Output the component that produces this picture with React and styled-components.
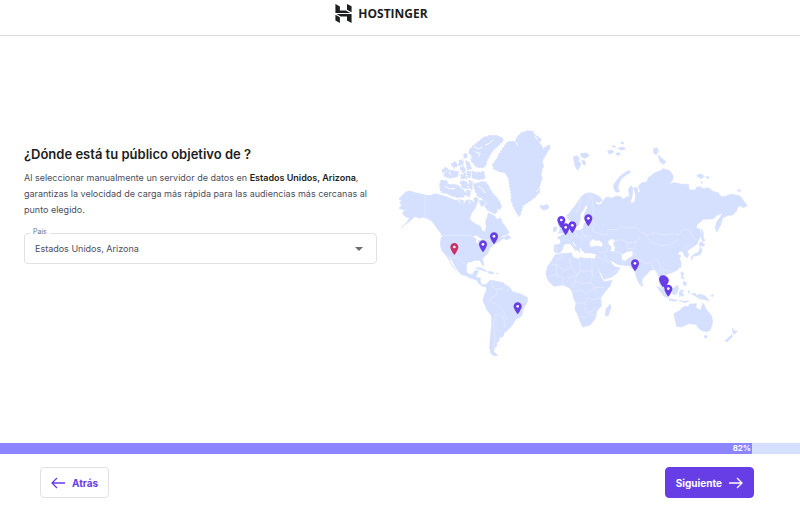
import React, { useState } from "react";
import styled, { createGlobalStyle } from "styled-components";
import { SiHostinger } from "react-icons/si";

const GlobalStyle = createGlobalStyle`
  * {
    box-sizing: border-box;
  }

  body {
    margin: 0;
    background: #fff;
    color: #1d1e20;
    font-family: Inter, "Open Sans", sans-serif;
  }
`;

const Page = styled.div`
  display: flex;
  flex-direction: column;
  min-height: 100vh;
`;

const Header = styled.header`
  display: flex;
  align-items: center;
  justify-content: center;
  height: 36px;
  padding: 0 38px 8px 0;
  border-bottom: 1px solid #dadce0;
`;

const Logo = styled.div`
  display: flex;
  align-items: center;
  gap: 5px;
  font-family: "Open Sans", sans-serif;
  font-size: 12px;
  font-weight: 700;
`;

const Main = styled.main`
  display: grid;
  grid-template-columns: 1fr 1fr;
  align-items: start;
  column-gap: 20px;
  flex: 1;
  padding: 93px 50px 48px 24px;
`;

const Target = styled.section`
  padding-top: 15px;
`;

const Title = styled.h1`
  margin: 0 0 6px;
  font-size: 13px;
  line-height: 20px;
  font-weight: 600;
`;

const Description = styled.p`
  margin: 0 0 15px;
  color: #4d4e5c;
  font-size: 9px;
  line-height: 16px;

  strong {
    color: #1d1e20;
    font-weight: 600;
  }
`;

const Field = styled.div`
  position: relative;

  label {
    position: absolute;
    top: -6px;
    left: 6px;
    padding: 0 3px;
    background: #fff;
    color: #727586;
    font-size: 7px;
    line-height: 10px;
  }

  svg {
    position: absolute;
    top: 14px;
    right: 14px;
    pointer-events: none;
  }
`;

const Select = styled.select`
  display: block;
  width: 100%;
  height: 31px;
  padding: 0 30px 0 10px;
  appearance: none;
  background: #fff;
  border: 1px solid #e1e2e8;
  border-radius: 4px;
  color: #4d4e5c;
  font-family: inherit;
  font-size: 9px;
`;

const Map = styled.svg`
  display: block;
  width: 100%;
  height: auto;
`;

const Progress = styled.div`
  height: 11px;
  background: #d5dfff;
`;

const ProgressFill = styled.div`
  height: 100%;
  padding-right: 1px;
  background: #8c85ff;
  color: #fff;
  font-size: 8px;
  font-weight: 700;
  line-height: 11px;
  text-align: right;
`;

const Footer = styled.footer`
  display: flex;
  justify-content: space-between;
  padding: 13px 46px 23px 40px;
`;

const Button = styled.button`
  display: flex;
  align-items: center;
  justify-content: center;
  gap: 7px;
  height: 31px;
  padding: 0 10px;
  background: ${({ $primary }) => ($primary ? "#673de6" : "#fff")};
  border: 1px solid ${({ $primary }) => ($primary ? "#673de6" : "#e1e2e8")};
  border-radius: 4px;
  color: ${({ $primary }) => ($primary ? "#fff" : "#673de6")};
  font-family: inherit;
  font-size: 10px;
  font-weight: 700;
  cursor: pointer;
`;

const LAND = [
  // north america
  "M12 262 20 252 14 244 22 238 12 235 22 222 35 212 45 210 60 215 75 218 90 222 105 224 120 218 135 222 150 226 165 232 180 238 195 236 210 240 222 236 232 240 240 246 236 232 246 228 250 238 245 250 240 262 230 275 224 290 228 300 240 308 256 316 262 330 270 332 274 318 272 300 278 285 280 276 290 280 300 286 306 296 316 290 322 305 332 318 338 328 342 335 332 342 318 346 326 350 340 342 348 350 335 356 325 352 312 362 300 368 292 374 284 382 280 395 270 405 262 412 265 425 266 435 260 428 254 418 240 418 228 422 218 424 214 436 214 452 222 460 234 460 238 450 250 448 246 460 242 468 256 472 256 484 262 492 272 490 280 492 274 497 262 496 252 488 244 476 228 472 212 464 198 460 190 450 182 438 174 424 166 412 161 409 166 425 176 440 184 448 178 442 168 428 160 414 156 406 148 398 140 388 136 370 138 352 142 345 136 334 126 322 118 310 108 298 96 292 84 288 72 292 60 286 54 292 42 302 28 312 18 320 36 304 44 292 30 286 22 276 30 268 18 264Z",
  // south america
  "M285 478 300 480 325 485 332 492 345 500 352 512 375 518 398 530 396 545 385 562 380 585 362 595 352 612 340 625 328 635 324 646 312 652 312 660 304 666 306 674 299 680 296 692 308 703 298 705 288 698 284 680 286 650 290 610 290 585 275 565 264 540 268 522 275 508 272 492Z",
  // africa
  "M480 402 500 398 530 396 533 408 550 415 556 409 565 412 580 412 597 414 605 435 613 455 620 472 627 482 651 478 645 495 630 512 617 530 619 555 605 570 601 592 585 612 563 618 555 600 547 578 540 565 543 545 535 530 533 515 525 502 505 492 477 496 460 480 453 460 457 438 470 420Z",
  "M645 550 648 560 639 585 631 584 633 565Z",
  // europe and asia
  "M518 292 516 282 524 276 530 266 540 255 550 240 558 228 570 218 585 215 600 220 615 228 622 238 612 245 600 240 604 250 615 252 625 240 632 230 640 228 650 232 662 226 675 226 685 235 698 226 705 230 700 205 708 194 714 202 712 222 706 245 713 247 720 240 722 225 717 200 726 200 730 216 736 212 730 196 740 185 755 183 760 170 780 155 795 150 805 143 825 150 835 165 832 178 822 188 840 185 860 190 880 190 883 207 900 207 906 198 915 197 924 203 940 200 955 212 970 215 975 225 990 227 1005 220 1022 222 1035 225 1050 245 1057 253 1045 260 1034 254 1027 260 1025 270 1012 282 1000 283 988 288 983 290 978 310 965 333 961 320 965 303 975 290 983 277 965 283 955 293 925 295 907 310 903 320 915 325 917 345 905 370 890 380 876 390 881 402 877 410 868 404 864 392 855 390 847 398 858 405 853 412 858 425 857 435 845 448 830 455 816 458 812 464 822 476 820 486 810 490 804 480 798 484 805 502 813 516 803 508 795 490 790 462 780 445 765 448 755 460 743 472 740 484 735 490 730 483 724 468 719 447 710 442 703 434 685 433 667 430 655 422 645 418 650 428 660 438 675 440 667 455 650 468 627 475 620 460 610 442 601 425 599 415 605 400 585 395 570 396 560 387 558 378 552 386 556 394 549 390 544 375 536 364 530 362 536 372 548 382 543 390 534 378 525 368 514 368 505 373 503 385 495 395 483 396 477 390 479 372 495 370 497 356 486 350 500 343 510 335 525 330 529 317 535 316 534 324 542 328 555 328 565 322 567 308 577 304 576 297 590 289 575 292 566 290 567 280 574 268 579 256 572 252 564 268 555 282 556 296 550 314 543 316 538 300 526 300Z",
  // british isles, iceland
  "M490 300 500 298 502 312 510 325 505 335 490 337 496 325 490 312Z",
  "M477 318 485 318 484 330 475 332Z",
  "M436 252 445 255 455 250 462 256 458 264 446 267 438 262Z",
  // svalbard, franz josef, novaya zemlya
  "M535 108 545 104 554 112 550 118 558 130 548 148 540 135Z",
  "M556 98 575 96 583 104 570 112 560 108Z",
  "M560 118 570 120 572 132 564 130Z",
  "M638 90 652 87 656 94 642 99ZM662 98 672 94 676 101 666 103ZM668 82 682 78 692 83 680 88ZM650 76 660 74 662 79ZM676 66 684 62 686 69Z",
  "M657 205 656 192 665 178 676 165 690 155 704 148 706 154 690 164 678 174 672 188 668 200 674 212 664 214Z",
  "M775 83 786 80 790 92 783 101 776 96ZM788 102 800 112 812 122 806 130 796 124Z",
  "M905 164 916 158 928 166 918 173ZM932 165 944 169 938 173ZM918 182 924 184 920 188ZM1027 208 1037 206 1035 212Z",
  // japan, sakhalin
  "M920 325 924 332 925 352 930 358 923 362 919 350Z",
  "M915 362 930 370 924 376 914 374ZM916 378 921 386 917 400 904 404 893 406 896 400 908 396 913 388ZM889 406 894 410 890 416Z",
  // south east asia
  "M858 452 866 456 862 466 868 474 860 472ZM866 482 874 484 873 494 864 490ZM853 436 858 432 857 440Z",
  "M785 495 794 500 806 511 818 524 817 531 806 524 795 510Z",
  "M820 533 834 535 846 538 843 541 824 538ZM852 538 868 541 882 539 870 545Z",
  "M829 503 838 500 847 492 851 503 844 519 834 521Z",
  "M855 509 867 507 860 513 867 524 862 526 858 520 855 527 852 518ZM880 508 884 511 882 518Z",
  "M890 518 900 517 906 524 916 519 930 525 943 539 927 535 915 534 906 528Z",
  "M948 524 956 520 952 528ZM739 485 744 490 741 496 737 491Z",
  // oceania
  "M837 578 855 568 862 560 870 556 878 557 885 549 893 549 905 548 902 560 917 568 923 546 928 553 933 565 950 585 953 605 945 628 935 632 925 630 916 626 910 620 903 610 880 608 860 618 845 616 840 595Z",
  "M928 644 937 644 934 652 929 650Z",
  "M1012 622 1018 630 1027 630 1018 640 1014 637ZM1010 641 1013 646 996 662 990 660Z",
  // caribbean
  "M242 441 256 440 270 447 275 452 262 448ZM278 452 290 452 298 457 284 458ZM304 456 310 457 306 459Z",
];

const ARCTIC = [
  // greenland
  "M290 130 295 145 310 153 330 157 340 175 343 200 347 220 347 240 357 265 370 287 377 285 381 270 385 255 400 245 420 230 435 215 435 195 443 175 440 155 447 135 443 120 455 100 467 80 463 70 445 80 435 65 440 53 420 40 415 30 400 28 380 33 367 45 360 60 340 60 330 70 320 85 310 100 303 115Z",
  // ellesmere
  "M222 85 235 72 250 60 265 48 285 42 305 42 324 50 326 60 312 74 300 84 292 94 284 107 277 120 272 137 262 142 245 140 235 130 225 117 230 105 220 98Z",
  "M228 148 245 153 268 150 272 174 250 178 230 172Z",
  // baffin
  "M233 185 245 186 258 180 274 182 284 198 294 216 306 228 314 240 322 256 316 268 306 264 310 272 300 280 286 274 274 266 266 252 270 242 258 232 248 228 240 212 236 200Z",
  // victoria and the smaller islands
  "M136 176 156 178 162 190 175 188 192 193 204 203 216 217 208 229 190 232 170 226 155 219 138 216 132 196Z",
  "M143 155 160 143 172 148 192 150 190 167 165 173 148 168Z",
  "M165 130 180 119 192 132 178 143ZM190 118 204 113 207 130 192 137ZM204 98 216 95 219 110 206 113ZM137 148 152 137 162 144 146 157Z",
  "M192 140 205 133 215 148 204 159ZM210 117 222 121 232 144 216 149ZM195 160 213 153 217 174 197 175ZM214 150 228 150 228 171 216 171Z",
  "M192 180 206 178 221 185 219 206 202 202ZM220 176 233 180 233 208 220 202ZM214 206 229 208 225 230 212 224ZM250 238 266 236 276 252 258 258Z",
];

// closed seas and lakes cut out of the land
const WATER = [
  "M587 360 596 354 603 360 612 358 623 368 621 377 606 374 588 378 583 370Z",
  "M640 360 650 354 660 358 654 368 660 378 658 392 646 390 650 378 640 368Z",
  "M680 402 696 392 712 390 713 404 700 412 690 420 680 414Z",
  "M232 348 244 343 254 350 262 354 258 358 250 356 248 366 243 366 244 352Z",
];

const BORDERS =
  "M90 222V290M96 292 108 302M142 343H232M260 358 282 356 292 346M160 408 178 410 190 409 202 422 214 432" +
  "M290 480 294 500 306 504 304 522 290 530 282 545M306 504 322 502 330 492M340 500 336 514M290 545 304 548 318 560 328 576 326 590 340 596M300 580 296 610 300 650 296 690M300 580 318 584 330 604 328 620" +
  "M482 420 500 410 502 400M470 430 484 430 508 448 530 436 522 412M553 416 556 450 590 450M556 450 545 462 522 470 516 484M590 412 592 470 586 486 600 500 626 500M530 436 545 462 540 482 532 500M484 430 486 462 460 466M486 462 506 472 500 492M540 482 562 488 586 486M535 512 560 508 572 520 600 500M543 545 570 548 576 532 600 536 617 530M570 548 572 574 590 572 604 556M552 586 572 590 585 578 600 586M600 500 606 520" +
  "M560 230 550 262 542 282M585 218 578 250M590 222 596 262 590 288M590 290 598 310 592 330 612 338 634 342M540 330 544 344 530 350 520 362M520 332 516 344 508 350M560 330 566 344 590 346M544 344 562 350 560 372M480 376 486 380 484 394M566 344 584 358" +
  "M634 342 640 326 664 326 676 318 700 320 720 318 738 334 752 342 780 336 806 342 830 338 852 342 862 326 882 326 894 348 904 356M752 342 770 366 800 374 830 370 850 352M660 360 680 356 700 366 724 362 736 346M700 366 694 382 714 384 724 362M610 396 632 392 640 380M628 396 632 412 646 420M660 394 680 396 684 432M714 390 726 412 718 426 706 434M726 412 750 426 770 424 776 444M770 424 786 414 796 440 812 448 830 450M796 440 790 460M806 450 802 470 816 470M606 408 622 416 644 426M630 472 650 454 668 446M862 388 874 376 890 372M917 520V534";

const PINS = [
  { name: "Estados Unidos, Arizona", x: 178, y: 383, active: true },
  { name: "Estados Unidos, Virginia", x: 264, y: 375 },
  { name: "Canadá", x: 297, y: 351 },
  { name: "Brasil", x: 368, y: 561 },
  { name: "Reino Unido", x: 499, y: 302 },
  { name: "Países Bajos", x: 532, y: 318 },
  { name: "Francia", x: 512, y: 324 },
  { name: "Lituania", x: 580, y: 297 },
  { name: "India", x: 720, y: 432 },
  { name: "Malasia", x: 804, y: 480, filled: true },
  { name: "Singapur", x: 809, y: 483, filled: true },
  { name: "Indonesia", x: 820, y: 508 },
];

const Pin = ({ x, y, active, filled }) => (
  <g transform={`translate(${x} ${y})`} fill={active ? "#cb3267" : "#673de6"}>
    <path d="M0-17C-7-17-12-12-12-5-12 4 0 19 0 19S12 4 12-5C12-12 7-17 0-17Z" />
    <circle cy="-5" r={filled ? 1 : 4} fill={filled ? "#a99aff" : "#fff"} />
  </g>
);

const WorldMap = () => (
  <Map viewBox="6 24 1059 684" role="img" aria-label="Mapa">
    <g fill="#d5dfff">
      {LAND.map((d) => (
        <path key={d} d={d} stroke="#d5dfff" strokeWidth="2" />
      ))}
      {/* dashes bite into the coast for the fjords */}
      {ARCTIC.map((d) => (
        <path key={d} d={d} stroke="#fff" strokeWidth="5" strokeDasharray="2 6 3 9" />
      ))}
    </g>
    <g fill="none" stroke="#fff" strokeWidth="3">
      <path d="M236 76 252 84 262 78M240 92 256 98 250 108M296 56 282 68 270 72M150 196 166 204 180 202M250 196 262 204 270 216M162 152 168 162M362 62 370 74M420 44 428 58M436 200 424 212" />
      <path d="M190 238 196 246M210 238 206 248M222 240 226 250" />
    </g>
    {WATER.map((d) => (
      <path key={d} d={d} fill="#fff" />
    ))}
    <path d={BORDERS} fill="none" stroke="#e8eeff" strokeWidth="2" strokeLinejoin="round" />
    {PINS.map((pin) => (
      <Pin key={pin.name} {...pin} />
    ))}
  </Map>
);

const Arrow = ({ back }) => (
  <svg width="14" height="12" viewBox="0 0 14 12" fill="none" stroke="currentColor" strokeWidth="1.3">
    <path d={back ? "M14 6H1M6 1 1 6l5 5" : "M0 6h13M8 1l5 5-5 5"} />
  </svg>
);

const App = () => {
  const [country, setCountry] = useState(PINS[0].name);
  const progress = 94;

  return (
    <Page>
      <GlobalStyle />
      <Header>
        <Logo>
          <SiHostinger size={19} />
          HOSTINGER
        </Logo>
      </Header>
      <Main>
        <Target>
          <Title>¿Dónde está tu público objetivo de ?</Title>
          <Description>
            Al seleccionar manualmente un servidor de datos en{" "}
            <strong>{country}</strong>, garantizas la velocidad de carga más
            rápida para las audiencias más cercanas al punto elegido.
          </Description>
          <Field>
            <Select
              id="country"
              value={country}
              onChange={(e) => setCountry(e.target.value)}
            >
              {PINS.map(({ name }) => (
                <option key={name}>{name}</option>
              ))}
            </Select>
            <label htmlFor="country">País</label>
            <svg width="8" height="4" viewBox="0 0 8 4">
              <path d="M0 0h8L4 4Z" fill="#6b6c78" />
            </svg>
          </Field>
        </Target>
        <WorldMap />
      </Main>
      <Progress>
        <ProgressFill style={{ width: `${progress}%` }}>82%</ProgressFill>
      </Progress>
      <Footer>
        <Button type="button">
          <Arrow back />
          Atrás
        </Button>
        <Button type="button" $primary>
          Siguiente
          <Arrow />
        </Button>
      </Footer>
    </Page>
  );
};

export default App;
